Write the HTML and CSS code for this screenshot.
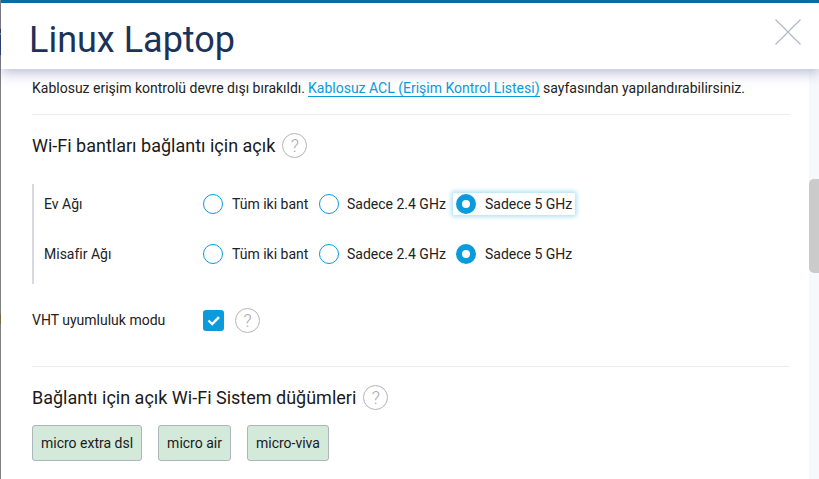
FILE: index.html
```html
<!DOCTYPE html>
<html lang="tr">
<head>
<meta charset="utf-8">
<title>Linux Laptop</title>
<link rel="stylesheet" href="styles.css">
</head>
<body>
<div class="backdrop">
  <div class="dialog">
    <header class="head">
      <h1 class="title">Linux Laptop</h1>
      <svg class="close" viewBox="0 0 26 26" aria-label="Kapat"><path d="M0.5 0.5L25.5 25.5M25.5 0.5L0.5 25.5"/></svg>
    </header>
    <div class="body-wrap">
      <main class="content">
        <p class="note">Kablosuz erişim kontrolü devre dışı bırakıldı. <a href="#">Kablosuz ACL (Erişim Kontrol Listesi)</a> sayfasından yapılandırabilirsiniz.</p>
        <hr class="rule rule-top">
        <div class="heading"><h2>Wi-Fi bantları bağlantı için açık</h2><span class="help">?</span></div>
        <div class="bands">
          <div class="band">
            <span class="band-name">Ev Ağı</span>
            <label class="opt opt-1"><span class="radio"></span>Tüm iki bant</label>
            <label class="opt opt-2"><span class="radio"></span>Sadece 2.4 GHz</label>
            <label class="opt opt-3 focused"><span class="radio on"></span>Sadece 5 GHz</label>
          </div>
          <div class="band">
            <span class="band-name">Misafir Ağı</span>
            <label class="opt opt-1"><span class="radio"></span>Tüm iki bant</label>
            <label class="opt opt-2"><span class="radio"></span>Sadece 2.4 GHz</label>
            <label class="opt opt-3"><span class="radio on"></span>Sadece 5 GHz</label>
          </div>
        </div>
        <div class="vht">
          <span class="vht-label">VHT uyumluluk modu</span>
          <span class="check"><svg viewBox="0 0 21 21"><path d="M5.5 10.5L9.2 14L16 7.2"/></svg></span>
          <span class="help">?</span>
        </div>
        <hr class="rule rule-bottom">
        <div class="heading heading-nodes"><h2>Bağlantı için açık Wi-Fi Sistem düğümleri</h2><span class="help">?</span></div>
        <div class="chips">
          <span class="chip">micro extra dsl</span>
          <span class="chip">micro air</span>
          <span class="chip">micro-viva</span>
        </div>
      </main>
      <div class="scrollbar"><div class="thumb"></div></div>
    </div>
  </div>
</div>
</body>
</html>
```
FILE: styles.css
```css
* { box-sizing: border-box; }
html, body { margin: 0; height: 100%; overflow: hidden; }
body {
  font-family: Roboto, "Liberation Sans", sans-serif;
  color: #1a1a1a;
  background: linear-gradient(to bottom, #7f7f7f 29px, #2b3f60 29px, #2b3f60 33px, #7f7f7f 33px, #7f7f7f 35px, #2b3f60 35px, #2b3f60 55px, #7f7f7f 55px, #7f7f7f 314px, #7a6a48 314px, #7a6a48 324px, #7f7f7f 324px);
}
.backdrop { height: 479px; padding: 0 0 0 1px; }
.dialog { height: 479px; background: #fff; border-top: 3px solid #0a6f9f; display: flex; flex-direction: column; }
.head { height: 66px; flex: none; position: relative; z-index: 2; background: #fff; display: flex; align-items: center; justify-content: space-between; padding: 8px 18px 0 28px; box-shadow: 0 4px 12px rgba(60, 70, 150, 0.35); }
.title { margin: 0; font-size: 36px; font-weight: 400; color: #1b3358; line-height: 42px; }
.close { width: 26px; height: 26px; margin-top: -17px; }
.close path { stroke: #b4b8c6; stroke-width: 1.2; fill: none; }
.body-wrap { flex: 1; display: flex; min-height: 0; }
.content { flex: 1; padding: 0 0 0 31px; min-width: 0; }
.scrollbar { width: 10px; background: #f7f8fb; padding-top: 110px; }
.thumb { height: 94px; background: #cbcbcb; border-radius: 5px 0 0 5px; }
.note { margin: 10px 0 0; font-size: 14px; line-height: 18px; color: #222; white-space: nowrap; }
.note a { color: #0a9bdc; text-decoration: none; border-bottom: 1px solid #0a9bdc; margin-left: -0.5px; }
.rule { border: 0; height: 1px; background: #ececec; margin: 0; width: 758px; }
.rule-top { margin-top: 17px; }
.rule-bottom { margin-top: 33px; }
.heading { display: flex; align-items: center; gap: 7px; margin-top: 17px; height: 26px; }
.heading h2 { margin: 0; font-size: 18px; font-weight: 400; color: #1a1a1a; white-space: nowrap; }
.help { width: 25px; height: 25px; flex: none; border: 1px solid #b5b5b5; border-radius: 50%; color: #a8a8a8; font-size: 18px; font-weight: 300; display: flex; align-items: center; justify-content: center; }
.bands { margin: 26px 0 0; border-left: 2px solid #d6d9e4; padding: 0 0 10px 10px; width: 600px; display: flex; flex-direction: column; gap: 10px; }
.band { height: 40px; display: flex; align-items: center; font-size: 14px; color: #222; }
.band-name { width: 159px; flex: none; }
.opt { display: flex; align-items: center; gap: 9px; white-space: nowrap; height: 22px; }
.opt-1 { width: 116px; }
.opt-2 { width: 134px; gap: 8px; }
.opt-3 { padding: 0 3px; }
.focused { box-shadow: 0 0 4px 2px #b5e2f5; border-radius: 1px; }
.radio { width: 20px; height: 20px; border-radius: 50%; border: 1px solid #0a9bdc; flex: none; background: #fff; }
.radio.on { border: 6px solid #0a9bdc; }
.vht { display: flex; align-items: center; margin-top: 23px; height: 26px; font-size: 14px; color: #222; }
.vht-label { width: 171px; flex: none; }
.check { width: 21px; height: 21px; background: #0a9bdc; border-radius: 3px; margin-right: 11px; flex: none; display: flex; }
.check svg { width: 21px; height: 21px; }
.check path { stroke: #fff; stroke-width: 2.4; fill: none; }
.chips { display: flex; gap: 16px; margin-top: 15px; }
.chip { height: 36px; padding: 0 8px; background: #d3e9da; border: 1px solid #adb5bd; border-radius: 3px; font-size: 14px; color: #1a1a1a; display: flex; align-items: center; }
```
